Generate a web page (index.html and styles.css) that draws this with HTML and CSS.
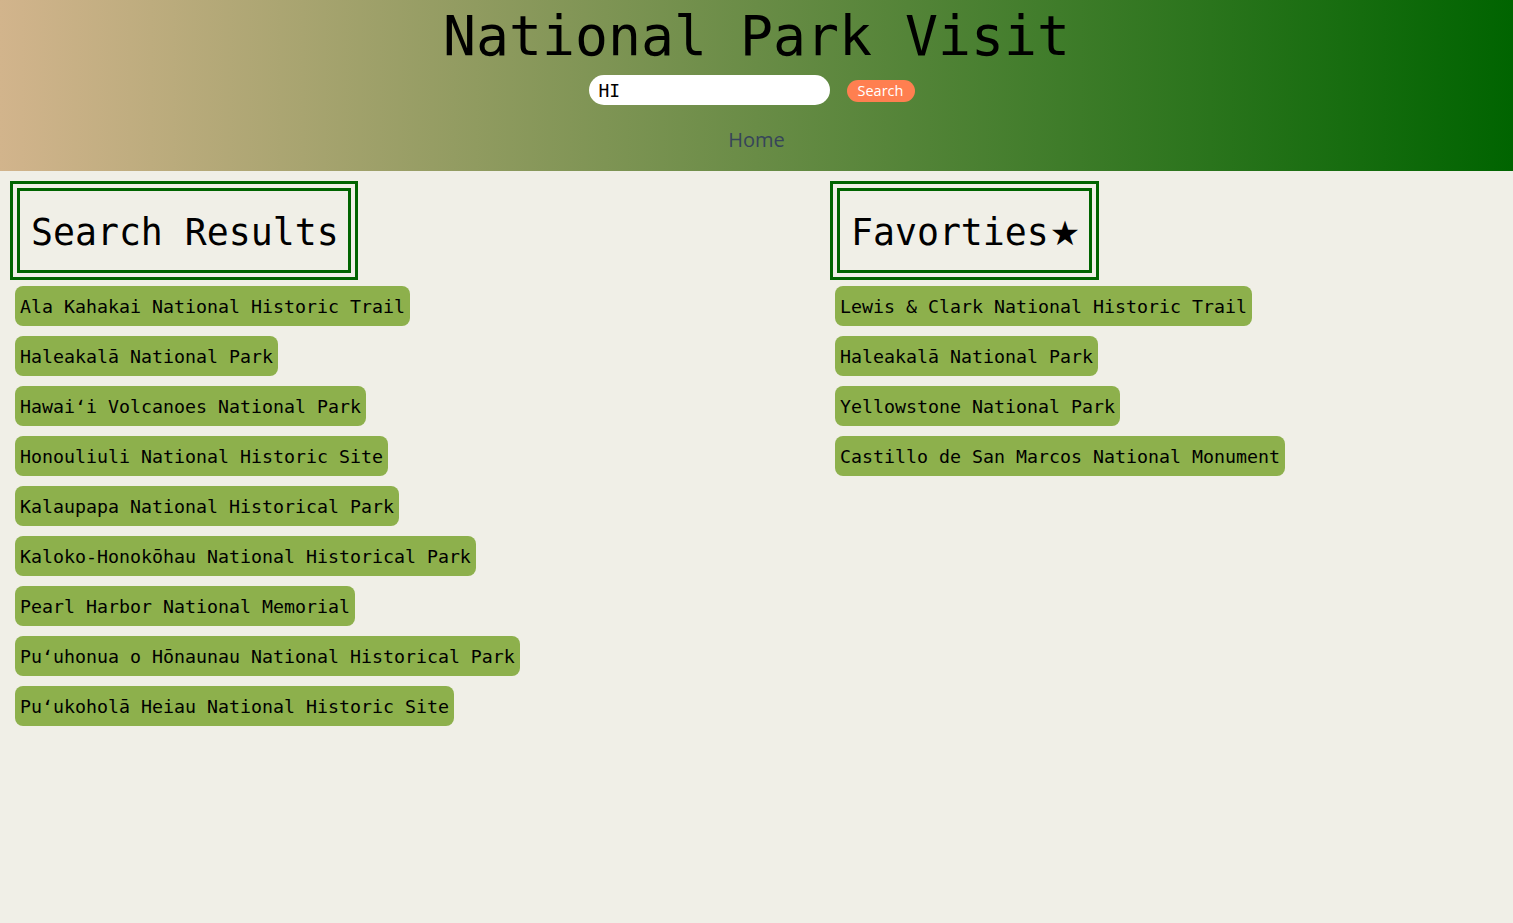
FILE: index.html
```html
<!DOCTYPE html>
<html lang="en">
<head>
<meta charset="utf-8">
<title>National Park Visit</title>
<link rel="stylesheet" href="styles.css">
</head>
<body>
<header class="site-header">
  <h1 class="site-title">National Park Visit</h1>
  <form class="search-row">
    <input class="search-input" type="text" value="HI">
    <button class="search-btn" type="button">Search</button>
  </form>
  <nav class="nav"><a class="nav-link" href="#">Home</a></nav>
</header>
<main class="columns">
  <section class="col">
    <div class="box-outer"><h2 class="box-inner">Search Results</h2></div>
    <ul class="park-list">
      <li><button class="park">Ala Kahakai National Historic Trail</button></li>
      <li><button class="park">Haleakalā National Park</button></li>
      <li><button class="park">Hawaiʻi Volcanoes National Park</button></li>
      <li><button class="park">Honouliuli National Historic Site</button></li>
      <li><button class="park">Kalaupapa National Historical Park</button></li>
      <li><button class="park">Kaloko-Honokōhau National Historical Park</button></li>
      <li><button class="park">Pearl Harbor National Memorial</button></li>
      <li><button class="park">Puʻuhonua o Hōnaunau National Historical Park</button></li>
      <li><button class="park">Puʻukoholā Heiau National Historic Site</button></li>
    </ul>
  </section>
  <section class="col">
    <div class="box-outer"><h2 class="box-inner">Favorties<span class="star">★</span></h2></div>
    <ul class="park-list">
      <li><button class="park">Lewis &amp; Clark National Historic Trail</button></li>
      <li><button class="park">Haleakalā National Park</button></li>
      <li><button class="park">Yellowstone National Park</button></li>
      <li><button class="park">Castillo de San Marcos National Monument</button></li>
    </ul>
  </section>
</main>
</body>
</html>
```
FILE: styles.css
```css
html, body {
  margin: 0;
  padding: 0;
}
body {
  background: #f0efe7;
  font-family: "DejaVu Sans Mono", monospace;
  color: #000;
  min-height: 923px;
}
.site-header {
  height: 171px;
  box-sizing: border-box;
  background: linear-gradient(to right, #d2b48c, #006400);
  display: flex;
  flex-direction: column;
  align-items: center;
}
.site-title {
  margin: 0;
  font-family: "DejaVu Sans Mono", monospace;
  font-weight: normal;
  font-size: 54.8px;
  line-height: 72px;
  height: 72px;
  letter-spacing: 0;
}
.search-row {
  display: flex;
  align-items: center;
  gap: 17px;
  margin: 3px 0 0 -10px;
  height: 30px;
}
.search-input {
  width: 241px;
  height: 30px;
  box-sizing: border-box;
  border: none;
  border-radius: 15px;
  background: #fff;
  padding: 0 10px;
  font-family: "DejaVu Sans Mono", monospace;
  font-size: 18px;
  font-weight: normal;
  color: #000;
  outline: none;
}
.search-btn {
  height: 22px;
  margin-top: 2px;
  border: none;
  border-radius: 11px;
  background: #ff7f50;
  color: #fff;
  font-family: "Open Sans", sans-serif;
  font-size: 14.5px;
  padding: 0 10px;
  width: 68px;
  line-height: 22px;
}
.nav {
  margin-top: 21px;
}
.nav-link {
  font-family: "Open Sans", sans-serif;
  font-size: 20px;
  color: #36445a;
  text-decoration: none;
  line-height: 27px;
}
.columns {
  display: grid;
  grid-template-columns: 820px 1fr;
  padding: 10px 0 0 10px;
}
.col {
  display: flex;
  flex-direction: column;
  align-items: flex-start;
}
.box-outer {
  border: 3px solid #006400;
  padding: 4px;
}
.box-inner {
  margin: 0;
  border: 3px solid #006400;
  padding: 21px 9px 16px 11px;
  font-family: "DejaVu Sans Mono", monospace;
  font-weight: normal;
  font-size: 36.5px;
  line-height: 42px;
  display: flex;
  align-items: center;
}
.star {
  font-family: "DejaVu Sans", sans-serif;
  font-size: 34px;
  margin-left: 1px;
}
.park-list {
  list-style: none;
  margin: 6px 0 0 5px;
  padding: 0;
  display: flex;
  flex-direction: column;
  align-items: flex-start;
  gap: 10px;
}
.park {
  border: none;
  background: #8db04c;
  border-radius: 8px;
  height: 40px;
  padding: 0 5px;
  font-family: "DejaVu Sans Mono", monospace;
  font-size: 18.27px;
  color: #000;
  white-space: nowrap;
}
```
